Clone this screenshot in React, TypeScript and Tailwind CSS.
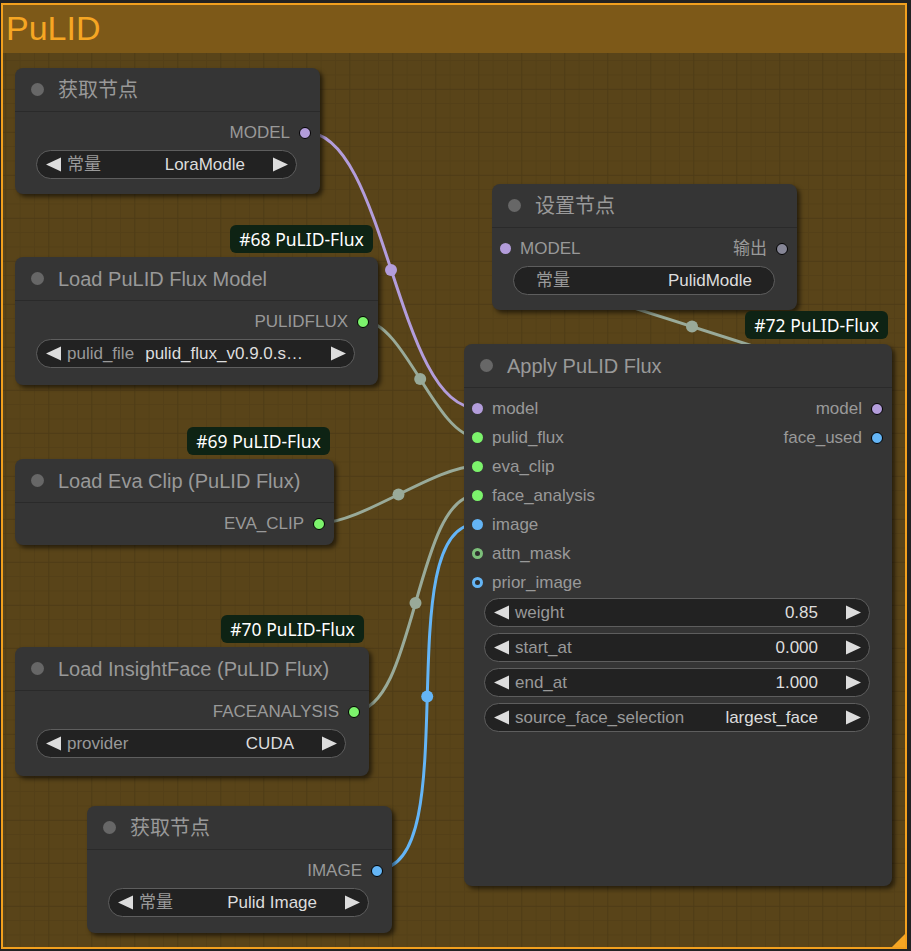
import type { ReactNode } from "react";

// SLOT COLOURS
const PURPLE = "bg-[#b39ddb]";
const GREEN = "bg-[#7cf36c]";
const BLUE = "bg-[#64b5f6]";

interface NodeProps {
  title: string;
  className: string;
  children?: ReactNode;
}

function GraphNode({ title, className, children }: NodeProps) {
  return (
    <div
      className={`absolute rounded-[8px] bg-[#353535] shadow-[3px_3px_4px_rgba(0,0,0,0.55)] ${className}`}
    >
      {/* TITLE */}
      <div className="h-[44px] flex items-center border-b border-[#2a2a2a]">
        <div className="ml-[16px] w-[13px] h-[13px] rounded-full bg-[#676767]" />
        <span className="ml-[14px] text-[20px] text-[#999]">{title}</span>
      </div>

      {/* BODY */}
      <div className="pt-[6px]">{children}</div>
    </div>
  );
}

function OutputRow({
  label,
  dot,
}: {
  label: string;
  dot: string;
}) {
  return (
    <div className="h-[29px] flex items-center justify-end pr-[9px]">
      <span className="text-[17px] text-[#999]">{label}</span>
      <div
        className={`ml-[9px] w-[12px] h-[12px] rounded-full border border-black ${dot}`}
      />
    </div>
  );
}

function InputRow({
  label,
  dot,
  ring,
  right,
}: {
  label: string;
  dot: string;
  ring?: string;
  right?: ReactNode;
}) {
  return (
    <div className="h-[29px] flex items-center pl-[8px]">
      {ring ? (
        <div
          className={`w-[11px] h-[11px] rounded-full border-[3px] bg-[#2c2c2c] ${ring}`}
        />
      ) : (
        <div className={`w-[11px] h-[11px] rounded-full ${dot}`} />
      )}
      <span className="ml-[9px] text-[17px] text-[#999]">{label}</span>
      <div className="flex-1" />
      {right}
    </div>
  );
}

function ArrowLeft() {
  return (
    <svg width="15" height="15" viewBox="0 0 15 15" className="shrink-0">
      <path d="M0 7.5 L15 0.5 L15 14.5 Z" fill="#dddddd" />
    </svg>
  );
}

function ArrowRight() {
  return (
    <svg width="15" height="15" viewBox="0 0 15 15" className="shrink-0">
      <path d="M15 7.5 L0 0.5 L0 14.5 Z" fill="#dddddd" />
    </svg>
  );
}

function ComboWidget({
  label,
  value,
  className = "mx-[21px]",
}: {
  label: string;
  value: string;
  className?: string;
}) {
  return (
    <div
      className={`h-[29px] rounded-full border border-[#5e5e5e] bg-[#222] flex items-center pl-[9px] pr-[8px] ${className}`}
    >
      <ArrowLeft />
      <span className="ml-[6px] text-[17px] text-[#999] whitespace-nowrap">
        {label}
      </span>
      <div className="flex-1" />
      <span className="mr-[28px] text-[17px] text-[#ddd] whitespace-nowrap">
        {value}
      </span>
      <ArrowRight />
    </div>
  );
}

function Badge({ text, className }: { text: string; className: string }) {
  return (
    <div
      className={`absolute h-[28px] w-[143px] rounded-[6px] bg-[#0e2314] flex items-center justify-center font-['Noto_Sans',sans-serif] text-[17.5px] text-white ${className}`}
    >
      {text}
    </div>
  );
}

// LINKS: CUBIC SPLINES LIKE LITEGRAPH
const links = [
  { d: "M305.5 132 C386.5 132 396 408 477 408", mx: 391, my: 270, c: "#b39ddb" },
  { d: "M363.5 321 C404 321 436.4 437 477 437", mx: 420.2, my: 379, c: "#99aa99" },
  { d: "M320 523 C361.8 523 435.2 466 477 466", mx: 398.5, my: 494.5, c: "#99aa99" },
  { d: "M354 711 C416.1 711 414.9 495 477 495", mx: 415.5, my: 603, c: "#99aa99" },
  { d: "M377.5 869 C467.3 869 387.2 524 477 524", mx: 427.2, my: 696.5, c: "#64b5f6" },
  { d: "M560 284.4 L820 367.6", mx: 692, my: 326.6, c: "#99aa99" },
];

export default function App() {
  return (
    <div className="relative w-[911px] h-[951px] overflow-hidden bg-[#222] font-['Liberation_Sans','Noto_Sans_CJK_SC',sans-serif]">
      {/* GROUP */}
      <div className="absolute left-[1px] top-[3px] w-[906px] h-[946px] border-2 border-[#f2a01e] bg-[#594419] flex flex-col">
        <div className="relative z-10 h-[48px] shrink-0 bg-[#7d5918] pl-[3px] pt-[6px] text-[34px] leading-none text-[#f6a623]">
          PuLID
        </div>

        {/* GRID */}
        <svg className="absolute inset-0 w-full h-full" width="902" height="942">
          <defs>
            <pattern
              id="minor"
              width="14.333"
              height="14.333"
              patternUnits="userSpaceOnUse"
              x="2.3"
              y="-2.2"
            >
              <path d="M0 0 H14.333 M0 0 V14.333" stroke="rgba(0,0,0,0.06)" strokeWidth="2" />
            </pattern>
            <pattern
              id="major"
              width="43"
              height="43"
              patternUnits="userSpaceOnUse"
              x="2.3"
              y="-2.2"
            >
              <path d="M0 0 H43 M0 0 V43" stroke="rgba(0,0,0,0.07)" strokeWidth="2" />
            </pattern>
          </defs>
          <rect width="100%" height="100%" fill="url(#minor)" />
          <rect width="100%" height="100%" fill="url(#major)" />
        </svg>

        {/* RESIZE CORNER */}
        <svg className="absolute right-0 bottom-0" width="13" height="13" viewBox="0 0 13 13">
          <path d="M13 0 L13 13 L0 13 Z" fill="#f6a623" />
        </svg>
      </div>

      {/* LINKS */}
      <svg className="absolute inset-0" width="911" height="951">
        {links.map((l, i) => (
          <g key={i}>
            <path d={l.d} stroke={l.c} strokeWidth="3" fill="none" />
            <circle cx={l.mx} cy={l.my} r="6" fill={l.c} />
          </g>
        ))}
      </svg>

      {/* NODES */}
      <GraphNode title="获取节点" className="left-[15px] top-[68px] w-[305px] h-[126px]">
        <OutputRow label="MODEL" dot={PURPLE} />
        <ComboWidget label="常量" value="LoraModle" className="mt-[3px] mx-[21px] mr-[23px]" />
      </GraphNode>

      <Badge text="#68 PuLID-Flux" className="left-[230px] top-[225px]" />
      <GraphNode title="Load PuLID Flux Model" className="left-[15px] top-[257px] w-[363px] h-[128px]">
        <OutputRow label="PULIDFLUX" dot={GREEN} />
        <ComboWidget label="pulid_file" value="pulid_flux_v0.9.0.s…" className="mt-[3px] mx-[21px] mr-[23px]" />
      </GraphNode>

      <Badge text="#69 PuLID-Flux" className="left-[187px] top-[427px]" />
      <GraphNode title="Load Eva Clip (PuLID Flux)" className="left-[15px] top-[459px] w-[319px] h-[86px]">
        <OutputRow label="EVA_CLIP" dot={GREEN} />
      </GraphNode>

      <Badge text="#70 PuLID-Flux" className="left-[221px] top-[615px]" />
      <GraphNode title="Load InsightFace (PuLID Flux)" className="left-[15px] top-[647px] w-[354px] h-[129px]">
        <OutputRow label="FACEANALYSIS" dot={GREEN} />
        <ComboWidget label="provider" value="CUDA" className="mt-[3px] mx-[21px] mr-[23px]" />
      </GraphNode>

      <GraphNode title="获取节点" className="left-[87px] top-[806px] w-[305px] h-[127px]">
        <OutputRow label="IMAGE" dot={BLUE} />
        <ComboWidget label="常量" value="Pulid Image" className="mt-[3px] mx-[21px] mr-[23px]" />
      </GraphNode>

      <GraphNode title="设置节点" className="left-[492px] top-[184px] w-[305px] h-[126px]">
        <InputRow
          label="MODEL"
          dot={PURPLE}
          right={
            <div className="flex items-center pr-[9px]">
              <span className="text-[17px] text-[#999]">输出</span>
              <div className="ml-[9px] w-[12px] h-[12px] rounded-full border border-black bg-[#868696]" />
            </div>
          }
        />
        <div className="mt-[3px] mx-[21px] mr-[22px] h-[29px] rounded-full border border-[#5e5e5e] bg-[#222] flex items-center justify-between px-[22px] text-[17px]">
          <span className="text-[#999]">常量</span>
          <span className="text-[#ddd]">PulidModle</span>
        </div>
      </GraphNode>

      <Badge text="#72 PuLID-Flux" className="left-[745px] top-[311px]" />
      <GraphNode title="Apply PuLID Flux" className="left-[464px] top-[344px] w-[428px] h-[542px]">
        <InputRow
          label="model"
          dot={PURPLE}
          right={
            <div className="flex items-center pr-[9px]">
              <span className="text-[17px] text-[#999]">model</span>
              <div className={`ml-[9px] w-[12px] h-[12px] rounded-full border border-black ${PURPLE}`} />
            </div>
          }
        />
        <InputRow
          label="pulid_flux"
          dot={GREEN}
          right={
            <div className="flex items-center pr-[9px]">
              <span className="text-[17px] text-[#999]">face_used</span>
              <div className={`ml-[9px] w-[12px] h-[12px] rounded-full border border-black ${BLUE}`} />
            </div>
          }
        />
        <InputRow label="eva_clip" dot={GREEN} />
        <InputRow label="face_analysis" dot={GREEN} />
        <InputRow label="image" dot={BLUE} />
        <InputRow label="attn_mask" dot={GREEN} ring="border-[#7cbf7a]" />
        <InputRow label="prior_image" dot={BLUE} ring="border-[#64b5f6]" />

        {/* WIDGETS */}
        <div className="mt-[1px] ml-[20px] mr-[22px] flex flex-col gap-[6px]">
          <ComboWidget label="weight" value="0.85" className="" />
          <ComboWidget label="start_at" value="0.000" className="" />
          <ComboWidget label="end_at" value="1.000" className="" />
          <ComboWidget label="source_face_selection" value="largest_face" className="" />
        </div>
      </GraphNode>
    </div>
  );
}
